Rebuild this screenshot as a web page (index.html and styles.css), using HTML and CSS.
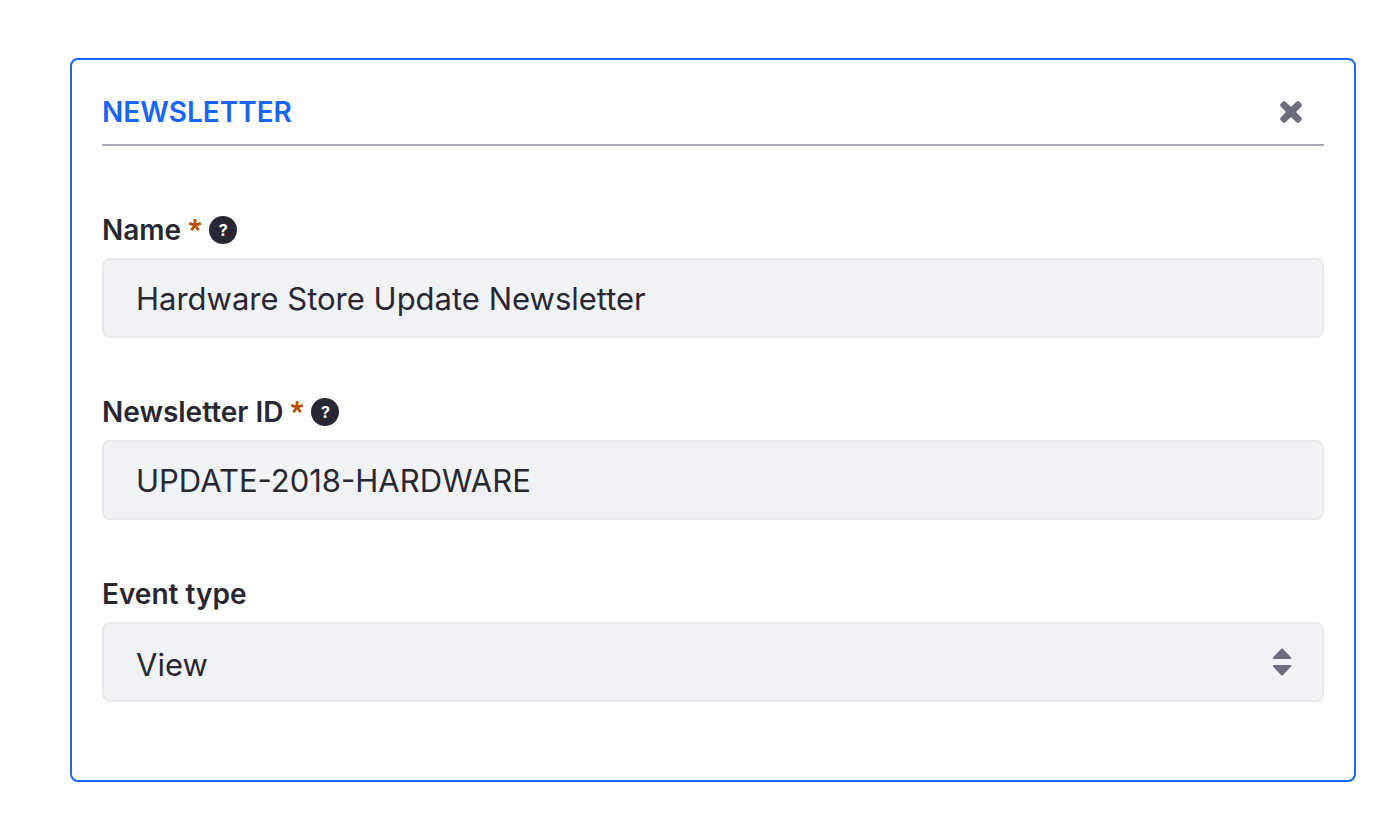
FILE: index.html
```
<!DOCTYPE html>
<html lang="en">
<head>
    <meta charset="UTF-8">
    <meta name="viewport" content="width=device-width, initial-scale=1.0">
    <title>Newsletter</title>
    <link rel="stylesheet" href="styles.css">
</head>
<body>

    <form class="card">
        <div class="card-header">
            <h2 class="card-title">NEWSLETTER</h2>
            <button type="button" class="close" aria-label="Close">
                <svg width="22" height="22" viewBox="0 0 22 22">
                    <path d="M4.2 2.2L11 8.6L17.8 2.2L19.8 4.2L13.4 11L19.8 17.8L17.8 19.8L11 13.4L4.2 19.8L2.2 17.8L8.6 11L2.2 4.2Z" fill="currentColor" stroke="currentColor" stroke-width="4" stroke-linejoin="round"/>
                </svg>
            </button>
        </div>

        <div class="form-group">
            <div class="form-label">
                <label for="name">Name</label>
                <svg class="required" width="14" height="14" viewBox="0 0 14 14">
                    <path d="M7 7.2V1M7 7.2L1.2 5.4M7 7.2L12.8 5.4M7 7.2L3.4 12.2M7 7.2L10.6 12.2" stroke="currentColor" stroke-width="2.8"/>
                </svg>
                <span class="help">?</span>
            </div>
            <input type="text" class="form-control" id="name" name="name" value="Hardware Store Update Newsletter" required>
        </div>

        <div class="form-group">
            <div class="form-label">
                <label for="newsletterId">Newsletter ID</label>
                <svg class="required" width="14" height="14" viewBox="0 0 14 14">
                    <path d="M7 7.2V1M7 7.2L1.2 5.4M7 7.2L12.8 5.4M7 7.2L3.4 12.2M7 7.2L10.6 12.2" stroke="currentColor" stroke-width="2.8"/>
                </svg>
                <span class="help">?</span>
            </div>
            <input type="text" class="form-control" id="newsletterId" name="newsletterId" value="UPDATE-2018-HARDWARE" required>
        </div>

        <div class="form-group">
            <div class="form-label">
                <label for="eventType">Event type</label>
            </div>
            <div class="select-wrap">
                <select class="form-control" id="eventType" name="eventType">
                    <option>View</option>
                </select>
                <svg class="select-icon" width="20" height="28" viewBox="0 0 20 28">
                    <path d="M1.2 11Q0.6 9.8 1.4 9L9.2 0.8Q10 0 10.8 0.8L18.6 9Q19.4 9.8 18.8 11ZM1.2 17Q0.6 18.2 1.4 19L9.2 27.2Q10 28 10.8 27.2L18.6 19Q19.4 18.2 18.8 17Z" fill="currentColor"/>
                </svg>
            </div>
        </div>
    </form>

</body>
</html>
```

FILE: styles.css
```
* {
    box-sizing: border-box;
}

body {
    margin: 0;
    padding: 58px 42px 40px 70px;
    background: #fff;
    color: #272833;
    font-family: Inter, "Liberation Sans", sans-serif;
}

.card {
    padding: 30px 30px 24px;
    border: 2px solid #1865fb;
    border-radius: 8px;
}

.card-header {
    display: flex;
    align-items: center;
    justify-content: space-between;
    margin-bottom: 64px;
    padding-bottom: 10px;
    border-bottom: 2px solid #a7a9bc;
}

.card-title {
    margin: 0;
    color: #1865fb;
    font-size: 28px;
    font-weight: 600;
    line-height: 44px;
}

.close {
    display: flex;
    margin-right: 22px;
    padding: 0;
    border: none;
    background: none;
    color: #6b6c7e;
    cursor: pointer;
}

.form-group {
    margin-bottom: 54px;
}

.form-label {
    display: flex;
    align-items: center;
    gap: 7px;
    margin-bottom: 8px;
    font-size: 28px;
    font-weight: 600;
    line-height: 40px;
}

.required {
    margin-bottom: 10px;
    color: #b95000;
}

.help {
    width: 28px;
    height: 28px;
    border-radius: 50%;
    background: #272833;
    color: #fff;
    font-size: 16px;
    font-weight: 700;
    line-height: 28px;
    text-align: center;
}

.form-control {
    display: block;
    width: 100%;
    height: 80px;
    padding: 0 32px;
    border: 2px solid #e7e7ed;
    border-radius: 8px;
    background: #f1f2f5;
    color: #272833;
    font-family: inherit;
    font-size: 31px;
    appearance: none;
}

select.form-control {
    padding-top: 4px;
}

.form-control:focus {
    outline: none;
    border-color: #1865fb;
}

.select-wrap {
    position: relative;
}

.select-icon {
    position: absolute;
    top: 26px;
    right: 32px;
    color: #6b6c7e;
    pointer-events: none;
}
```
